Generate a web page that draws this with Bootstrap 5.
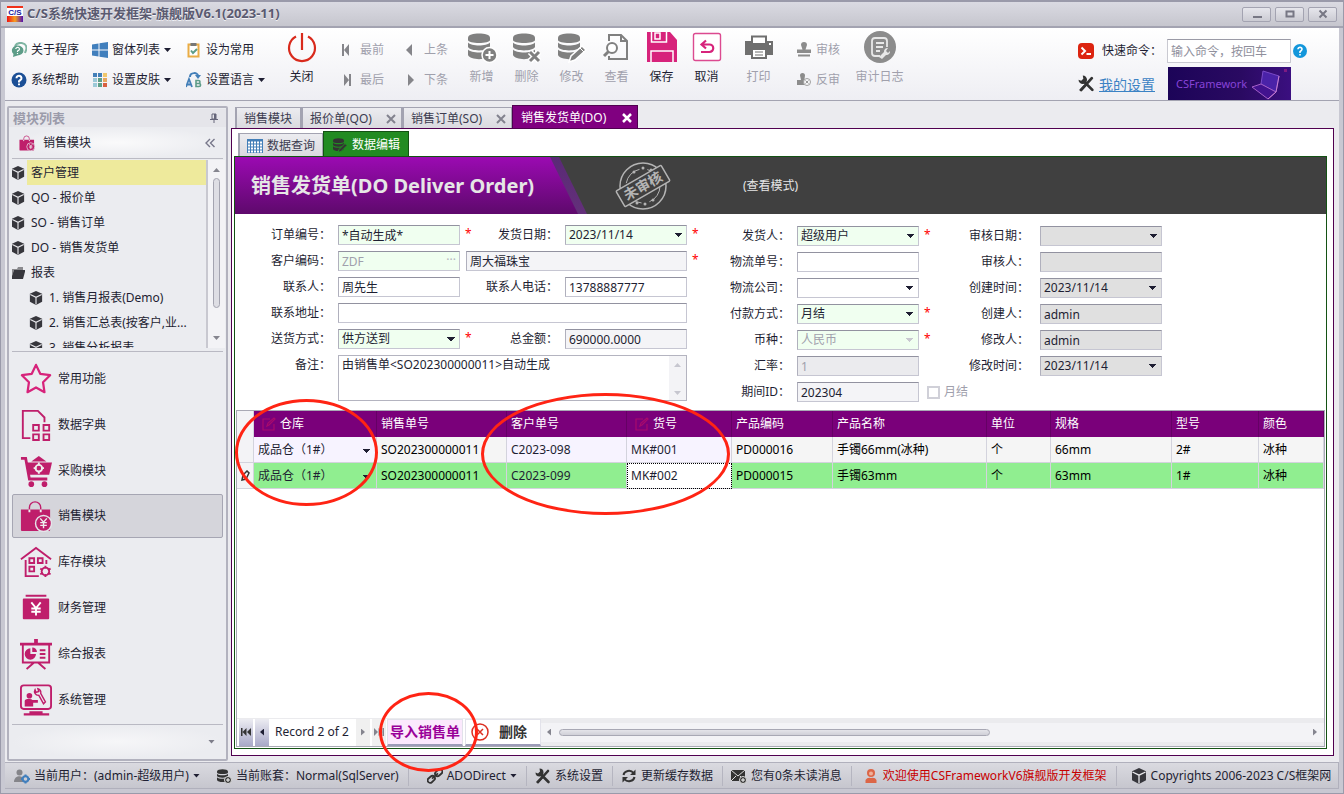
<!DOCTYPE html>
<html lang="zh-CN">
<head>
<meta charset="utf-8">
<meta name="viewport" content="width=device-width, initial-scale=1">
<title>C/S系统快速开发框架-旗舰版V6.1(2023-11)</title>
<link rel="stylesheet" href="https://cdn.jsdelivr.net/npm/bootstrap@5.3.0/dist/css/bootstrap.min.css">
<style>
:root{--ink:#1e1e32;--dim:#a0a0ac;--edge:#a3a3b1;--brand:#bf1e6b}
body{font:12px/20px "Noto Sans","Noto Sans CJK SC",sans-serif;color:var(--ink);background:#c8c8d2}
button,input,select,textarea{font:inherit;color:inherit}
svg{flex:none;display:block}
.app{height:100vh;min-height:600px;padding:0 4px 4px;border:1px solid #9a9aaa;border-top-width:2px;overflow:hidden}
.titlebar{height:26px;background:linear-gradient(#dadae2,#c6c6ce);margin:0 -4px;padding:0 6px;border-bottom:2px solid var(--edge)}
.titlebar h1{font-size:13px;font-weight:700;color:#5a5a70;text-shadow:0 1px #f2f2f6}
.logo{width:16px;height:16px;background:linear-gradient(#f03018 0 12%,#fff 12% 62%,transparent 62%),linear-gradient(90deg,#f01010,#f8a020,#5010b0);font:700 8px/14px "Liberation Sans",sans-serif;color:#1818a0;text-align:center}
.winbtn{width:29px;height:15px;border:1px solid var(--edge);border-radius:2px;background:linear-gradient(#e6e6ec,#cbcbd3);padding:0}
.ribbon{height:73px;background:linear-gradient(#fff,#eeeef3);border-bottom:1px solid var(--edge);padding:7px 0 0 6px}
.plain{border:0;background:none;padding:0;color:inherit;display:flex;align-items:center;white-space:nowrap}
.plain:disabled{color:var(--dim)}
.small-cmd{height:30px}
.small-cmd>svg{width:16px;height:16px;margin-right:4px}
.down{width:7px;height:4px;background:currentColor;clip-path:polygon(0 0,100% 0,50% 100%);flex:none;display:inline-block}
.up{width:7px;height:4px;background:currentColor;clip-path:polygon(0 100%,100% 100%,50% 0);flex:none}
.lft{width:4px;height:7px;background:currentColor;clip-path:polygon(100% 0,100% 100%,0 50%);flex:none}
.rgt{width:4px;height:7px;background:currentColor;clip-path:polygon(0 0,0 100%,100% 50%);flex:none}
.w81{width:81px}.w94{width:94px}.w93{width:93px}.w64{width:64px}.w55{width:55px}
.big-cmd{width:45px;flex-direction:column;height:60px;margin-top:-4px}
.big-cmd>svg{width:32px;height:32px;margin-bottom:4px}
.wide-cmd{width:59px}
.quick{margin-right:32px}
.quick-label{width:65px}
.command{width:124px;height:24px;border:1px solid #c9c9d1;border-top:1px solid #9a9aa6;border-radius:0;padding:0 3px;background:#fff}
.command::placeholder{color:#8f8f9c}
.gap-help{margin-left:2px}
.set-link{font-size:14px;width:69px;color:#3b82c4}
.banner{width:123px;height:33px;background:linear-gradient(90deg,#1c0458,#2a0a62 60%,#3b0f80);color:#8743d8;font-size:11px}
.workspace{background:#ebebef;flex:1;min-height:0}
.side{width:221px;border:2px solid #b2b2be;border-radius:2px;background:#ebecf0;margin:5px 3px 1px 2px;padding:1px 3px;flex:none}
.side-title{height:18px;color:#9b9baa;font-size:13px;font-weight:700;background:#e5e5ea;margin:0 -3px;padding:0 7px 0 4px}
.side-group{height:32px;border-bottom:1px solid #bbbbc4;background:radial-gradient(closest-side,#fafafb,#ebecf0);padding:0 8px 0 7px}
.tree{height:188px;overflow:hidden;margin:1px -2px 0 0}
.tree ul{flex:1;min-width:0;border-right:2px solid #c8c8d0}
.tree a{display:flex;align-items:center;height:25px;color:var(--ink);text-decoration:none;white-space:nowrap}
.tree a svg{width:14px;height:14px;margin:0 2px 0 -1px}
.tree a span{padding-left:4px;height:25px;line-height:25px;flex:1}
.tree .sub a{padding-left:18px}
.tree .chosen span{background:#eeea9c}
.vbar{width:17px;background:#f3f3f6;color:#85858f}
.thumb-v{width:7px;flex:1;border:1px solid #a4a4b0;border-radius:4px;background:#dedee4;margin:6px 0 28px}
.modules{border-top:1px solid #b9b9c3;margin-top:3px;padding-top:5px}
.modules .list-group-item{height:44px;margin-bottom:2px;background:none;border:1px solid transparent;border-radius:2px;padding:0 0 0 7px;display:flex;align-items:center;gap:6px;color:var(--ink)}
.modules .list-group-item.active{background:#d5d5db;border-color:#a6a6b3;color:var(--ink)}
.modules svg{width:32px;height:32px;color:var(--brand)}
.side-foot{border-top:1px solid #b9b9c3;flex:1;padding:0 8px;color:#7d7d89;background:radial-gradient(closest-side,#f6f6f8,#ebecf0)}
.work{flex:1;min-width:0;padding:4px 5px 6px 0}
.tabs{padding-left:4px;height:23px}
.tabs button{height:21px;border:1px solid var(--edge);border-bottom:0;border-left-width:2px;background:linear-gradient(#ececf0,#dadadf);color:#3c3c50;padding:1px 5px 0 7px}
.tabs .cross{margin-left:auto;color:#82828e}
.tabs button.on{height:23px;background:#800080;border:1px solid #500050;border-bottom:0;color:#fff;padding-left:8px}
.tabs button.on .cross{color:#fff}
.t1{width:66px}.t2{width:101px}.t3{width:110px}.t4{width:126px}
.purple{border:1px solid #500050;background:#fff;padding:2px 6px 6px 2px;flex:1;min-height:0}
.tabs.inner{height:25px}
.tabs.inner button{height:23px}
.tabs.inner button.on{background:#228b22;border-color:#145214;height:25px}
.t5{width:85px}.t6{width:86px}
.green{border:1px solid #145214;flex:1;min-height:0;background:#fff}
.doc-head{height:57px;background:#404040;color:#e6e6e6}
.doc-head h2{font-size:20px;font-weight:700;line-height:57px;width:352px;padding-left:16px;background:linear-gradient(#9b0ab2,#5e096c);clip-path:polygon(0 0,315px 0,343px 100%,0 100%);white-space:nowrap}
.doc-title{background:linear-gradient(#5a2a76,#63307a);clip-path:polygon(0 0,324px 0,352px 100%,0 100%)}
.stamp{margin-left:26px}
.mode{margin-left:70px}
.form-area{height:196px;padding-top:11px}
.fgrid{display:grid;grid-auto-rows:20px;row-gap:6px;align-content:start}
.f1{grid-template-columns:103px 122px 105px 122px 15px}
.f2{grid-template-columns:95px 122px 51px;padding-top:1px}
.f3{grid-template-columns:70px 122px;padding-top:1px}
.fgrid label.cap{text-align:right;padding-right:7px;line-height:19px;white-space:nowrap}
.f3 label.cap{padding-right:11px;margin-left:-30px}
.req{color:#f00;padding-left:5px;line-height:18px}
.box{width:100%;height:20px;border:1px solid #c6c6d2;border-top-color:#9292a0;border-left-color:#b0b0bd;border-radius:0;background:#fff;padding:0 3px;outline:0;line-height:18px;color:var(--ink);opacity:1}
select.box,.cell-select{appearance:none;background-image:linear-gradient(45deg,transparent 50%,#1e1e32 50%),linear-gradient(-45deg,transparent 50%,#1e1e32 50%);background-size:4px 4px;background-repeat:no-repeat;background-position:right 8px top 7px,right 4px top 7px}
.must{background-color:#f0fff0}
.read{background-color:#f4f4f7}
.lock{background-color:#e0e0e0}
.off{color:#a0a0ac;background-color:#ebebee}
.off.must{background-color:#f0fff0}
select.off.must{background-image:linear-gradient(45deg,transparent 50%,#c8c8d0 50%),linear-gradient(-45deg,transparent 50%,#c8c8d0 50%)}
.memo{height:46px;grid-column:2/5;border:1px solid #b4b4c0;display:flex}
.memo textarea{border:0;resize:none;outline:0;flex:1;padding:0 3px;line-height:18px;overflow:hidden}
.memo .vbar{color:#c6c6cf;width:17px;padding:7px 0 5px}
.span-all{grid-column:2/5}
.span-two{grid-column:3/5;padding-left:6px}
.dots{position:absolute;right:4px;top:-1px;color:#b4b4bc}
.dimmed{color:#a0a0ac}
.tick{width:13px;height:13px;appearance:none;border:2px solid #d0d0d8;background:#fff;margin:0 4px 0 0}
.sheet{border:1px solid #a9a9b5;margin:0 1px 1px;flex:1;min-height:0;position:relative}
.rows{table-layout:fixed;width:100%;border-collapse:separate;border-spacing:0;white-space:nowrap}
.rows th{height:26px;background:#7a007a;color:#fff;font-weight:400;padding:0 4px;border-right:1px solid #650065}
.rows td{height:26px;padding:0 4px;border:solid #d3d3dd;border-width:0 1px 1px 0;background:#f5f5f5;overflow:hidden;color:#000}
.rows tr>:first-child{background:#f3f3f6;border-right:1px solid #d3d3dd;padding:0}
.rows td.edit{background:#f7f3ff;color:var(--ink)}
.rows tr.picked td{background:#90ee90}
.rows tr.picked td:first-child{background:#f3f3f6}
.rows tr.picked td.focused{background:#fff;outline:1px dotted #000;outline-offset:-1px}
.cell-select{border:0;width:100%;height:24px;background-color:transparent;outline:0;background-position:right 5px top 11px,right 1px top 11px;color:var(--ink);padding:0}
.c17{width:17px}.c123{width:123px}.c130{width:130px}.c120{width:120px}.c105{width:105px}.c101{width:101px}.c154{width:154px}.c64{width:64px}.c121{width:121px}.c87{width:87px}
.navigator{height:28px;background:#ebebee;position:relative}
.navigator .plain{height:27px;justify-content:center}
.navset{background:#fff}
.record{padding:0 6px;width:85px;white-space:nowrap}
.step{width:14px;background:linear-gradient(#ececf2,#a9a9c8)!important;margin-left:2px}
.step.idle{background:#f0f0f0!important;color:#85858f}
.act{border:1px solid #e2e2ea;border-bottom:2px solid #9c9cb8;font-size:14px;font-weight:700;width:76px;margin-left:2px;background:#fff;color:#333}
.act.pink{background:#fbe9fd;color:#990099;margin-left:1px}
.act-del{gap:10px;justify-content:flex-start!important;padding-left:5px}
.hbar{flex:1;height:19px;background:#f3f3f6;color:#85858f;padding:0 7px 0 6px}
.hthumb{width:56%;height:7px;border:1px solid #a8a8b4;border-radius:4px;background:linear-gradient(#e4e4e9,#d0d0d8)}
.ring{position:absolute;border:3px solid #ff2414;border-radius:50%;pointer-events:none;z-index:5}
.ring-a{left:-2px;top:-12px;width:143px;height:107px}
.ring-b{left:244px;top:-18px;width:249px;height:122px}
.ring-c{left:142px;bottom:-26px;width:99px;height:80px}
.status{height:27px;border:1px solid #b0b0bc;border-left:0;background:linear-gradient(#dadae0,#c6c6ce);padding-left:9px;overflow:hidden;white-space:nowrap}
.status svg{width:16px;height:16px;margin-right:4px}
.status .item{padding-right:9px;margin-right:8px;border-right:1px solid #b5b5c0;flex:none}
.status .bare{border:0;padding-right:8px}
.status .link-item{padding-left:10px}
.status .hello{color:#c80000;padding-left:3px}
.status .about{padding-left:6px}
</style>
</head>
<body>
<svg width="0" height="0" class="position-absolute" aria-hidden="true">
<symbol id="cube" viewBox="0 0 16 16"><path fill="#36363c" d="M8 0l7 3.200v9L8 16l-7-3.800v-9z"/><path d="M1.500 4L8 7.200 14.500 4M8 7v8.500" stroke="#e8e8ec" stroke-width="1.300" fill="none"/></symbol>
<symbol id="db" viewBox="0 0 32 32"><g fill="currentColor"><path d="M2 6.500C2 1 24 1 24 6.500v2.500C24 13 2 13 2 9z"/><path d="M2 11.500c3 4 19 4 22 0V16c-2 4.500-20 4.500-22 0z"/><path d="M2 18.500c3 4 19 4 22 0V24c-2 5.500-20 5.500-22 0z"/></g></symbol>
<symbol id="bag" viewBox="0 0 34 34"><path fill="currentColor" d="M1 10h31v22a1 1 0 01-1 1H2a1 1 0 01-1-1z"/><path d="M10 13V8a6 6 0 0112 0v5" fill="none" stroke="currentColor" stroke-width="1.500"/><path d="M10 10v3M22 10v3" stroke="#eee" stroke-width="2"/><circle cx="25" cy="25" r="8.500" fill="currentColor" stroke="#e5e5ea" stroke-width="1.500"/><path d="M21.500 19.500l3.500 4 3.500-4M25 23.500V30M21.500 24h7M21.500 27h7" stroke="#eee" stroke-width="1.500" fill="none"/></symbol>
<symbol id="tools" viewBox="0 0 16 16"><path d="M3 14L13 3M5.500 6l8 8" stroke="#333" stroke-width="2.600" stroke-linecap="round"/><path d="M4.500.5a4 4 0 11-4 4l2.500 1 2-2z" fill="#333"/><path d="M1 14l2 1.500L8 10 6.500 8.500z" fill="#333"/></symbol>
<symbol id="edit" viewBox="0 0 14 14"><path d="M8 2H1v11h11V7M5 9l1-3 6-5 1 1-6 6z" fill="none" stroke="#a80a6c" stroke-width="1.200"/></symbol>
</svg>

<div class="app d-flex flex-column">
<header class="titlebar d-flex align-items-center flex-shrink-0">
  <span class="logo me-1">C/S</span>
  <h1 class="mb-0 me-auto">C/S系统快速开发框架-旗舰版V6.1(2023-11)</h1>
  <div class="d-flex gap-1 ps-1">
    <button class="winbtn" aria-label="最小化"><svg class="mx-auto" width="12" height="12"><path d="M2 9h9" stroke="#777784" stroke-width="2"/></svg></button>
    <button class="winbtn" aria-label="最大化"><svg class="mx-auto" width="12" height="12"><path d="M2.500 3.500h7v5h-7z" fill="none" stroke="#777784" stroke-width="2"/></svg></button>
    <button class="winbtn" aria-label="关闭窗口"><svg class="mx-auto" width="12" height="12"><path d="M2.500 2.500l7 7m0-7l-7 7" stroke="#777784" stroke-width="2"/></svg></button>
  </div>
</header>

<nav class="ribbon d-flex flex-shrink-0">
  <div class="w81">
    <button class="plain small-cmd"><svg viewBox="0 0 16 16"><path d="M4 4a6 5 0 0111.500 2c0 2-1 3-1.500 5" fill="none" stroke="#7fb5a3" stroke-width="2"/><path d="M6.500 3.500a6 5 0 110 10L2 15l.5-3A5.500 5 0 016.500 3.500z" fill="#5d9c88"/><path d="M4.800 7a1.800 1.600 0 113 1.200L6.500 9v1M6.500 11v1" stroke="#fff" stroke-width="1.200" fill="none"/></svg>关于程序</button>
    <button class="plain small-cmd"><svg viewBox="0 0 16 16"><circle cx="8" cy="8" r="7.500" fill="#1c4f96"/><path d="M5.500 6.200a2.500 2.300 0 114 1.700L8 9.200V10.500M8 11.500v1.800" stroke="#fff" stroke-width="2" fill="none"/></svg>系统帮助</button>
  </div>
  <div class="w94">
    <button class="plain small-cmd"><svg viewBox="0 0 16 16"><path fill="#417fbd" d="M0 2.500l6.500-1v6H0zM7.500 1.300L16 0v7.500H7.500zM0 8.500h6.500v6L0 13.500zM7.500 8.500H16V16l-8.500-1.300z"/></svg>窗体列表<i class="down ms-1"></i></button>
    <button class="plain small-cmd"><svg viewBox="0 0 16 16"><path fill="#437fb8" d="M1 1h4v4H1zM6 1h4v4H6z"/><path fill="#f0c76c" d="M11 1h4v4h-4z"/><path fill="#9cc9d8" d="M1 6h4v4H1zM1 11h4v4H1z"/><path fill="#5e9f88" d="M6 6h4v4H6zM6 11h4v4H6z"/><path fill="#e8a860" d="M11 6h4v4h-4z"/><path fill="#d86040" d="M11 11h4v4h-4z"/></svg>设置皮肤<i class="down ms-1"></i></button>
  </div>
  <div class="w93">
    <button class="plain small-cmd"><svg viewBox="0 0 16 16"><path d="M2.500 2.500h10v12h-10z" fill="#fff" stroke="#e9ac45" stroke-width="2"/><path d="M4.500 1h6v3h-6z" fill="#777"/><path d="M5 8.500l2 2.500 4-4" fill="none" stroke="#5d9c88" stroke-width="2"/></svg>设为常用</button>
    <button class="plain small-cmd"><svg viewBox="0 0 16 16"><path d="M4 5C4 0 12 0 12 4" fill="none" stroke="#437fb8" stroke-width="2"/><path d="M9 3h6l-3 4z" fill="#437fb8"/><path d="M0 15L3 7l3 8M1 12.500h4" fill="none" stroke="#437fb8" stroke-width="1.800"/><path d="M10 8.500V14.500h3a1.600 1.500 0 000-3h-3 2.500a1.500 1.500 0 000-3z" fill="none" stroke="#5d9c88" stroke-width="1.600"/></svg>设置语言<i class="down ms-1"></i></button>
  </div>
  <button class="plain big-cmd"><svg viewBox="0 0 32 32"><path d="M10 5.500a13 13 0 1012 0M16 2v17" fill="none" stroke="#d92a1c" stroke-width="2.200"/></svg>关闭</button>
  <div class="w64 ms-3">
    <button class="plain small-cmd" disabled><svg viewBox="0 0 16 16"><path fill="#85858a" d="M2 2h2v12H2zM9 2v12L4 8z"/></svg>最前</button>
    <button class="plain small-cmd" disabled><svg viewBox="0 0 16 16"><path fill="#85858a" d="M9 2h2v12H9zM4 2v12l5-6z"/></svg>最后</button>
  </div>
  <div class="w55">
    <button class="plain small-cmd" disabled><svg viewBox="0 0 16 16"><path fill="#85858a" d="M8 2v12L2 8z"/></svg>上条</button>
    <button class="plain small-cmd" disabled><svg viewBox="0 0 16 16"><path fill="#85858a" d="M4 2v12l6-6z"/></svg>下条</button>
  </div>
  <button class="plain big-cmd" disabled><svg viewBox="0 0 32 32" color="#808080"><use href="#db"/><circle cx="23.500" cy="24" r="7.500" fill="#808080" stroke="#fff" stroke-width="1.500"/><path d="M19.500 24h8M23.500 20v8" stroke="#fff" stroke-width="2"/></svg>新增</button>
  <button class="plain big-cmd" disabled><svg viewBox="0 0 32 32" color="#808080"><use href="#db"/><path d="M19 21l9 9m0-9l-9 9" stroke="#fff" stroke-width="6"/><path d="M19 21l9 9m0-9l-9 9" stroke="#808080" stroke-width="3"/></svg>删除</button>
  <button class="plain big-cmd" disabled><svg viewBox="0 0 32 32" color="#808080"><use href="#db"/><path d="M13 31l2-6L26 15l4 4-11 10z" fill="#808080" stroke="#fff" stroke-width="1.500"/><path d="M24 17l4 4" stroke="#fff"/></svg>修改</button>
  <button class="plain big-cmd" disabled><svg viewBox="0 0 32 32"><path d="M8 10V4h12l6 6v18H8v-3M20 4v6h6" fill="none" stroke="#808080" stroke-width="2"/><circle cx="11" cy="17" r="5" fill="#fff" stroke="#808080" stroke-width="2"/><path d="M7.500 20.500l-4.500 4.500" stroke="#808080" stroke-width="3"/></svg>查看</button>
  <button class="plain big-cmd"><svg viewBox="0 0 32 32"><path d="M1 1h23l7 8v22H1z" fill="#d7237b"/><path d="M5.500 1v10h15V1M9 2h5v6H9zM5 31V20h22v11" fill="none" stroke="#fff" stroke-width="1.500"/></svg>保存</button>
  <button class="plain big-cmd"><svg viewBox="0 0 32 32"><rect x="2.500" y="2.500" width="27" height="27" rx="2" fill="#fff" stroke="#dc4a90" stroke-width="1.400"/><path d="M15 9.500l-4.500 4 4.500 4M11 13.500h7.500a3.500 3.500 0 010 7.500H10" fill="none" stroke="#d7237b" stroke-width="2.200"/></svg>取消</button>
  <button class="plain big-cmd wide-cmd" disabled><svg viewBox="0 0 32 32"><path fill="#6f6f6f" d="M2 10h28v14H2z"/><path d="M9 5.500h14V13H9zM9 18h14v9H9z" fill="#fff" stroke="#6f6f6f" stroke-width="2"/><path d="M12 21h8M12 24h8" stroke="#6f6f6f"/><path d="M26 13h2" stroke="#fff" stroke-width="2"/></svg>打印</button>
  <div class="ms-2">
    <button class="plain small-cmd" disabled><svg viewBox="0 0 16 16"><path fill="#8c8c8c" d="M5 3a3 3 0 016 0L9.500 7.500H15V11H1V7.500h5.500zM2 12.500h12V14.500H2z"/></svg>审核</button>
    <button class="plain small-cmd" disabled><svg viewBox="0 0 16 16"><path fill="#8c8c8c" d="M4 3.500a2.500 2.500 0 015 0L8.500 7H12v6H1V8h4z"/><circle cx="11" cy="10" r="3.500" fill="#f5f5f7" stroke="#a0a0a0"/><path d="M9.500 8.500l3 3m0-3l-3 3" stroke="#999"/></svg>反审</button>
  </div>
  <button class="plain big-cmd wide-cmd ms-2 ps-1 me-auto" disabled><svg viewBox="0 0 32 32"><circle cx="16" cy="16" r="16" fill="#8c8c8c"/><path d="M16 25h-5a3 3 0 01-3-3V10a3 3 0 013-3h9a3 3 0 013 3v6M12 12h8M12 16h7M12 20h4" fill="none" stroke="#e8e8e8" stroke-width="1.800"/><path d="M15 26l5-5a3.500 3.500 0 014-4l-2 3 2 2 2-2a3.500 3.500 0 01-4 4l-4 4z" fill="#e8e8e8"/></svg>审计日志</button>
  <div class="quick">
    <div class="d-flex align-items-center my-1"><svg class="me-2" width="16" height="16"><rect width="16" height="16" rx="4" fill="#dc2410"/><path d="M3.500 4.500L7 8l-3.500 3.500M8.500 11H13" fill="none" stroke="#fff" stroke-width="2"/></svg><label for="cmd" class="quick-label">快速命令：</label><input class="command" id="cmd" placeholder="输入命令，按回车"><button class="plain gap-help" aria-label="命令帮助"><svg width="14" height="14"><circle cx="7" cy="7" r="7" fill="#1296db"/><path d="M5 5.300a2 1.800 0 113.200 1.300L7 7.700V9M7 10v1.500" stroke="#fff" stroke-width="1.600" fill="none"/></svg></button></div>
    <div class="d-flex"><svg class="me-1 mt-2" width="17" height="17"><use href="#tools"/></svg><a href="#" class="set-link pt-2">我的设置</a>
      <div class="banner d-flex align-items-center justify-content-between ps-2"><span>CSFramework</span><svg width="40" height="33"><path d="M12 4l16 5-3 16-15-8z" fill="#4a22a8" stroke="#7a4ac8"/><path d="M1 20l9-3 15 8-8 7z" fill="#42128f" stroke="#a55fc8"/><path d="M17 32l8-7 3-16" stroke="#c97fcf" fill="none"/><path d="M33 2h3v3h-3z" fill="#7d1b82"/></svg></div>
    </div>
  </div>
</nav>

<div class="workspace d-flex">
  <aside class="side d-flex flex-column">
    <div class="side-title d-flex align-items-center justify-content-between flex-shrink-0">模块列表<svg width="10" height="10"><path d="M3 1h4v5H3zM1 6.500h8M5 6v4" fill="none" stroke="#66667a"/><path d="M6 1v5" stroke="#66667a" stroke-width="2"/></svg></div>
    <div class="side-group d-flex align-items-center flex-shrink-0"><svg width="16" height="16" color="#bf1e6b"><use href="#bag"/></svg><span class="ms-2 me-auto">销售模块</span><svg width="10" height="10"><path d="M5 1L1 5l4 4M9.500 1l-4 4 4 4" fill="none" stroke="#77778a" stroke-width="1.400"/></svg></div>
    <div class="tree d-flex flex-shrink-0">
      <ul class="list-unstyled mb-0">
        <li class="chosen"><a href="#"><svg><use href="#cube"/></svg><span>客户管理</span></a></li>
        <li><a href="#"><svg><use href="#cube"/></svg><span>QO - 报价单</span></a></li>
        <li><a href="#"><svg><use href="#cube"/></svg><span>SO - 销售订单</span></a></li>
        <li><a href="#"><svg><use href="#cube"/></svg><span>DO - 销售发货单</span></a></li>
        <li><a href="#"><svg viewBox="0 0 14 14"><path d="M1 3h5l1-2h5v3H3L1 10z" fill="#8a8a8e"/><path d="M3 4h11.500L12 13H0z" fill="#36363c"/></svg><span>报表</span></a></li>
        <li class="sub"><a href="#"><svg><use href="#cube"/></svg><span>1. 销售月报表(Demo)</span></a></li>
        <li class="sub"><a href="#"><svg><use href="#cube"/></svg><span>2. 销售汇总表(按客户,业...</span></a></li>
        <li class="sub"><a href="#"><svg><use href="#cube"/></svg><span>3. 销售分析报表</span></a></li>
      </ul>
      <div class="vbar d-flex flex-column align-items-center py-2"><i class="up"></i><div class="thumb-v"></div><i class="down"></i></div>
    </div>
    <div class="modules list-group rounded-0 flex-shrink-0">
      <button class="list-group-item"><svg viewBox="0 0 34 34"><path d="M17 2l4.500 9.500L32 13l-7.500 7.500L26 31l-9-5-9 5 1.500-10.500L2 13l10.500-1.500z" fill="none" stroke="#d7237b" stroke-width="2.400" stroke-linejoin="round"/></svg>常用功能</button>
      <button class="list-group-item"><svg viewBox="0 0 34 34"><path d="M11 31H3V2h16l7 7v5M14 17h6v6h-6zM25 17h6v6h-6zM14 27h6v6h-6zM25 27h6v6h-6z" fill="none" stroke="currentColor" stroke-width="2"/></svg>数据字典</button>
      <button class="list-group-item"><svg viewBox="0 0 34 34"><path d="M6 8h28l-3 13H10z" fill="currentColor"/><path d="M1 3.500h5L10 25.500h19" fill="none" stroke="currentColor" stroke-width="3"/><path d="M12 7l8-6 8 6z" fill="currentColor"/><circle cx="20" cy="14" r="3.500" fill="none" stroke="#eee" stroke-width="2"/><path d="M20 8v3M20 17v3M14.500 14h3M22.500 14h3" stroke="#eee" stroke-width="2"/><circle cx="12" cy="31" r="3" fill="currentColor"/><circle cx="26" cy="31" r="3" fill="currentColor"/></svg>采购模块</button>
      <button class="list-group-item active" aria-current="true"><svg><use href="#bag"/></svg>销售模块</button>
      <button class="list-group-item"><svg viewBox="0 0 34 34"><path d="M1 14L17 2l16 12M6 15v17h14M28 15v4" fill="none" stroke="currentColor" stroke-width="2"/><path d="M10 13h5v5h-5zM19 13h5v5h-5zM10 22h5v5h-5z" fill="none" stroke="currentColor" stroke-width="2"/><circle cx="27" cy="27" r="4" fill="none" stroke="currentColor" stroke-width="2"/><path d="M27 21v3M27 30v3M21.500 24l3 1.500M29.500 28.500l3 1.500M21.500 30l3-1.500M29.500 25.500l3-1.500" stroke="currentColor" stroke-width="2"/></svg>库存模块</button>
      <button class="list-group-item"><svg viewBox="0 0 34 34"><path d="M6 3h22v2H6zM4 7h26a1 1 0 011 1v20a1 1 0 01-1 1H4a1 1 0 01-1-1V8a1 1 0 011-1z" fill="currentColor"/><path d="M12 11l5 6 5-6M17 17v8M12 17.500h10M12 21h10" fill="none" stroke="#fff" stroke-width="2"/></svg>财务管理</button>
      <button class="list-group-item"><svg viewBox="0 0 34 34"><path d="M15 1h4v4h15v3H0V5h15z" fill="currentColor"/><path d="M3 7v19h28V7M15 26l-8 7M19 26l8 7M21 13h6M21 17h6M21 21h6" fill="none" stroke="currentColor" stroke-width="2"/><path d="M11 11v6h6a6 6 0 11-6-6z" fill="currentColor"/><path d="M13 10a5 5 0 015 5h-5z" fill="currentColor"/></svg>综合报表</button>
      <button class="list-group-item"><svg viewBox="0 0 34 34"><rect x="1" y="1.500" width="32" height="25" rx="3" fill="none" stroke="currentColor" stroke-width="2"/><circle cx="10" cy="12.500" r="3" fill="currentColor"/><path d="M5 24v-6c0-3 8-2 8-1h6v3h-5v4zM4 31h27v2.500H4zM10 29h14v2H10z" fill="currentColor"/><path d="M16 6l1 3 3-1-1-3a4 4 0 013 5l5 9-2 2-5-9a4 4 0 01-4-6z" fill="none" stroke="currentColor" stroke-width="1.500"/></svg>系统管理</button>
    </div>
    <div class="side-foot d-flex align-items-center justify-content-end"><i class="down"></i></div>
  </aside>

  <main class="work d-flex flex-column">
    <div class="tabs d-flex align-items-end flex-shrink-0" role="tablist">
      <button class="plain t1" role="tab">销售模块</button>
      <button class="plain t2" role="tab">报价单(QO)<svg class="cross" width="10" height="10"><path d="M1 1l8 8m0-8L1 9" stroke="currentColor" stroke-width="2"/></svg></button>
      <button class="plain t3" role="tab">销售订单(SO)<svg class="cross" width="10" height="10"><path d="M1 1l8 8m0-8L1 9" stroke="currentColor" stroke-width="2"/></svg></button>
      <button class="plain t4 on" role="tab" aria-selected="true">销售发货单(DO)<svg class="cross" width="10" height="10"><path d="M1 1l8 8m0-8L1 9" stroke="currentColor" stroke-width="2.500"/></svg></button>
    </div>
    <div class="purple d-flex flex-column">
      <div class="tabs inner d-flex align-items-end flex-shrink-0" role="tablist">
        <button class="plain t5" role="tab"><svg class="me-1" width="16" height="16"><path d="M0 1h16v14H0z" fill="#437fb8"/><path d="M1 4.500h14M1 7.500h14M1 10.500h14M1 13.500h14" stroke="#fff" stroke-width="2" stroke-dasharray="2 1"/></svg>数据查询</button>
        <button class="plain t6 on" role="tab" aria-selected="true"><svg class="me-1" width="16" height="16" viewBox="0 0 32 32" color="#333"><use href="#db"/><path d="M12 31l2-6L26 13l4 4-12 12z" fill="#333" stroke="#228b22" stroke-width="2"/></svg>数据编辑</button>
      </div>
      <section class="green d-flex flex-column">
        <div class="doc-head d-flex align-items-center flex-shrink-0">
          <div class="doc-title"><h2 class="mb-0">销售发货单(DO Deliver Order)</h2></div>
          <svg class="stamp" width="60" height="52" viewBox="0 0 60 52"><g fill="none" stroke="#b4b4b4"><circle cx="30" cy="26" r="23" stroke-width="1.500"/><circle cx="30" cy="26" r="17" stroke-width="1" stroke-dasharray="20 8"/></g><g fill="#b4b4b4"><circle cx="21" cy="12" r="1.500"/><circle cx="30" cy="8" r="1.500"/><circle cx="38" cy="10" r="1.500"/><circle cx="24" cy="43" r="1.500"/><circle cx="32" cy="44" r="1.500"/><circle cx="40" cy="40" r="1.500"/></g><g transform="rotate(-30 30 26)"><rect x="4" y="17" width="52" height="18" rx="1" fill="#404040" stroke="#b4b4b4" stroke-width="1.500"/><text x="30" y="31" font-size="14" font-weight="700" fill="#b4b4b4" text-anchor="middle">未审核</text></g></svg>
          <span class="mode">(查看模式)</span>
        </div>
        <form class="form-area d-flex flex-shrink-0">
          <div class="fgrid f1">
            <label class="cap" for="a1">订单编号：</label><input class="box must" id="a1" value="*自动生成*">
            <div class="d-flex justify-content-between"><span class="req">*</span><label class="cap" for="a2">发货日期：</label></div><select class="box must" id="a2"><option>2023/11/14</option></select><span class="req">*</span>
            <label class="cap" for="a3">客户编码：</label><div class="position-relative"><input class="box must off" id="a3" value="ZDF" disabled><span class="dots">···</span></div>
            <div class="span-two"><input class="box read" aria-label="客户名称" value="周大福珠宝" readonly></div><span class="req">*</span>
            <label class="cap" for="a4">联系人：</label><input class="box" id="a4" value="周先生"><label class="cap" for="a5">联系人电话：</label><input class="box" id="a5" value="13788887777"><span></span>
            <label class="cap" for="a6">联系地址：</label><div class="span-all"><input class="box" id="a6"></div><span></span>
            <label class="cap" for="a7">送货方式：</label><select class="box must" id="a7"><option>供方送到</option></select><div class="d-flex justify-content-between"><span class="req">*</span><label class="cap" for="a8">总金额：</label></div><input class="box read" id="a8" value="690000.0000" readonly><span></span>
            <label class="cap" for="a9">备注：</label><div class="memo"><textarea id="a9">由销售单&lt;SO202300000011&gt;自动生成</textarea><div class="vbar d-flex flex-column align-items-center justify-content-between"><i class="up"></i><i class="down"></i></div></div>
          </div>
          <div class="fgrid f2">
            <label class="cap" for="b1">发货人：</label><select class="box must" id="b1"><option>超级用户</option></select><span class="req">*</span>
            <label class="cap" for="b2">物流单号：</label><input class="box" id="b2"><span></span>
            <label class="cap" for="b3">物流公司：</label><select class="box" id="b3"><option></option></select><span></span>
            <label class="cap" for="b4">付款方式：</label><select class="box must" id="b4"><option>月结</option></select><span class="req">*</span>
            <label class="cap" for="b5">币种：</label><select class="box must off" id="b5" disabled><option>人民币</option></select><span class="req">*</span>
            <label class="cap" for="b6">汇率：</label><input class="box off" id="b6" value="1" disabled><span></span>
            <label class="cap" for="b7">期间ID：</label><input class="box read" id="b7" value="202304" readonly>
            <div class="d-flex align-items-center ps-2"><input type="checkbox" class="tick" id="b8" disabled><label for="b8" class="dimmed">月结</label></div>
          </div>
          <div class="fgrid f3">
            <label class="cap" for="c1">审核日期：</label><select class="box lock" id="c1"><option></option></select>
            <label class="cap" for="c2">审核人：</label><input class="box lock" id="c2" readonly>
            <label class="cap" for="c3">创建时间：</label><select class="box lock" id="c3"><option>2023/11/14</option></select>
            <label class="cap" for="c4">创建人：</label><input class="box lock" id="c4" value="admin" readonly>
            <label class="cap" for="c5">修改人：</label><input class="box lock" id="c5" value="admin" readonly>
            <label class="cap" for="c6">修改时间：</label><select class="box lock" id="c6"><option>2023/11/14</option></select>
          </div>
        </form>
        <div class="sheet d-flex flex-column">
          <div class="flex-grow-1 overflow-hidden">
            <table class="rows">
              <colgroup><col class="c17"><col class="c123"><col class="c130"><col class="c120"><col class="c105"><col class="c101"><col class="c154"><col class="c64"><col class="c121"><col class="c87"><col></colgroup>
              <thead><tr><th></th><th><span class="d-flex align-items-center"><svg class="ms-1 me-1" width="14" height="14"><use href="#edit"/></svg>仓库</span></th><th>销售单号</th><th>客户单号</th><th><span class="d-flex align-items-center"><svg class="ms-1 me-1" width="14" height="14"><use href="#edit"/></svg>货号</span></th><th>产品编码</th><th>产品名称</th><th>单位</th><th>规格</th><th>型号</th><th>颜色</th></tr></thead>
              <tbody>
                <tr><td></td><td class="edit"><select class="cell-select" aria-label="仓库"><option>成品仓（1#）</option></select></td><td>SO202300000011</td><td class="edit">C2023-098</td><td class="edit">MK#001</td><td>PD000016</td><td>手镯66mm(冰种)</td><td>个</td><td>66mm</td><td>2#</td><td>冰种</td></tr>
                <tr class="picked"><td><svg class="mx-auto" width="10" height="12"><path d="M2 10l1-5 4-4 2 2-3 6z" fill="none" stroke="#333" stroke-width="1.500"/></svg></td><td class="edit"><select class="cell-select" aria-label="仓库"><option>成品仓（1#）</option></select></td><td>SO202300000011</td><td class="edit">C2023-099</td><td class="edit focused">MK#002</td><td>PD000015</td><td>手镯63mm</td><td>个</td><td>63mm</td><td>1#</td><td>冰种</td></tr>
              </tbody>
            </table>
          </div>
          <div class="navigator d-flex align-items-center flex-shrink-0">
            <div class="navset d-flex align-items-center">
              <button class="plain step" aria-label="第一条"><svg width="10" height="8"><path d="M0 0h1.500v8H0zM5.500 0v8l-4-4zM10 0v8L6 4z" fill="#333"/></svg></button>
              <button class="plain step" aria-label="上一条"><i class="lft"></i></button>
              <span class="record">Record 2 of 2</span>
              <button class="plain step idle" aria-label="下一条"><i class="rgt"></i></button>
              <button class="plain step idle" aria-label="最后一条"><svg width="10" height="8"><path d="M8.500 0H10v8H8.500zM0 0v8l4-4zM4.500 0v8l4-4z" fill="#85858f"/></svg></button>
              <button class="plain act pink">导入销售单</button>
              <button class="plain act act-del"><svg width="18" height="18"><circle cx="9" cy="9" r="8" fill="none" stroke="#dc2f20" stroke-width="1.500"/><path d="M6 6l6 6m0-6l-6 6" stroke="#dc2f20" stroke-width="1.500"/></svg>删除</button>
            </div>
            <div class="hbar d-flex align-items-center gap-2"><i class="lft"></i><div class="hthumb me-auto"></div><i class="rgt"></i></div>
            <div class="ring ring-c"></div>
          </div>
          <div class="ring ring-a"></div><div class="ring ring-b"></div>
        </div>
      </section>
    </div>
  </main>
</div>

<footer class="status d-flex align-items-center flex-shrink-0">
  <button class="plain item bare"><svg viewBox="0 0 16 16"><circle cx="5.500" cy="4.500" r="3" fill="#85858a"/><path d="M0 14c0-7 9-7 9-3v3z" fill="#85858a"/><circle cx="11.500" cy="11" r="2.800" fill="none" stroke="#417fbd" stroke-width="2"/><path d="M11.500 6.500v2M11.500 13.500v2M7 11h2M14 11h2" stroke="#417fbd" stroke-width="2"/></svg>当前用户：(admin-超级用户)<i class="down ms-1"></i></button>
  <span class="d-flex align-items-center item"><svg viewBox="0 0 32 32" color="#333"><use href="#db"/><circle cx="24" cy="24" r="7" fill="#333" stroke="#ddd" stroke-width="2"/><path d="M20 24h8M24 20v8" stroke="#fff" stroke-width="2"/></svg>当前账套：Normal(SqlServer)</span>
  <button class="plain item link-item"><svg viewBox="0 0 16 16"><g transform="rotate(-42 8 8)" fill="none" stroke="#333" stroke-width="1.800"><rect x="-1" y="5.500" width="8" height="5" rx="2.500"/><rect x="9" y="5.500" width="8" height="5" rx="2.500"/><path d="M4 8h8"/></g></svg>ADODirect<i class="down ms-1"></i></button>
  <button class="plain item"><svg><use href="#tools"/></svg>系统设置</button>
  <button class="plain item"><svg viewBox="0 0 16 16"><path d="M2.500 7a5.500 5 0 0110-2M13.500 9a5.500 5 0 01-10 2" fill="none" stroke="#333" stroke-width="2"/><path d="M14.500 1.500V7H9zM1.500 14.500V9H7z" fill="#333"/></svg>更新缓存数据</button>
  <button class="plain item"><svg viewBox="0 0 16 16"><path d="M0 2h14v11H0z" fill="#333"/><path d="M0 2l7 6 7-6M0 13l5-5M14 13L9 8" stroke="#ddd" fill="none"/><circle cx="12" cy="12" r="3.500" fill="#333" stroke="#ddd"/><path d="M10 12h4M12 10v4" stroke="#fff"/></svg>您有0条未读消息</button>
  <span class="d-flex align-items-center item hello"><svg viewBox="0 0 16 16"><circle cx="8" cy="5" r="4" fill="#dc6647"/><circle cx="8" cy="5.500" r="2" fill="#f0b09a"/><path d="M2.500 15v-3q2-3 5.500-2 4-1 5.500 2v3z" fill="#dc6647"/></svg>欢迎使用CSFrameworkV6旗舰版开发框架</span>
  <span class="d-flex align-items-center about"><svg><use href="#cube"/></svg>Copyrights 2006-2023 C/S框架网</span>
</footer>
</div>
<script src="https://cdn.jsdelivr.net/npm/bootstrap@5.3.0/dist/js/bootstrap.bundle.min.js"></script>
</body>
</html>
